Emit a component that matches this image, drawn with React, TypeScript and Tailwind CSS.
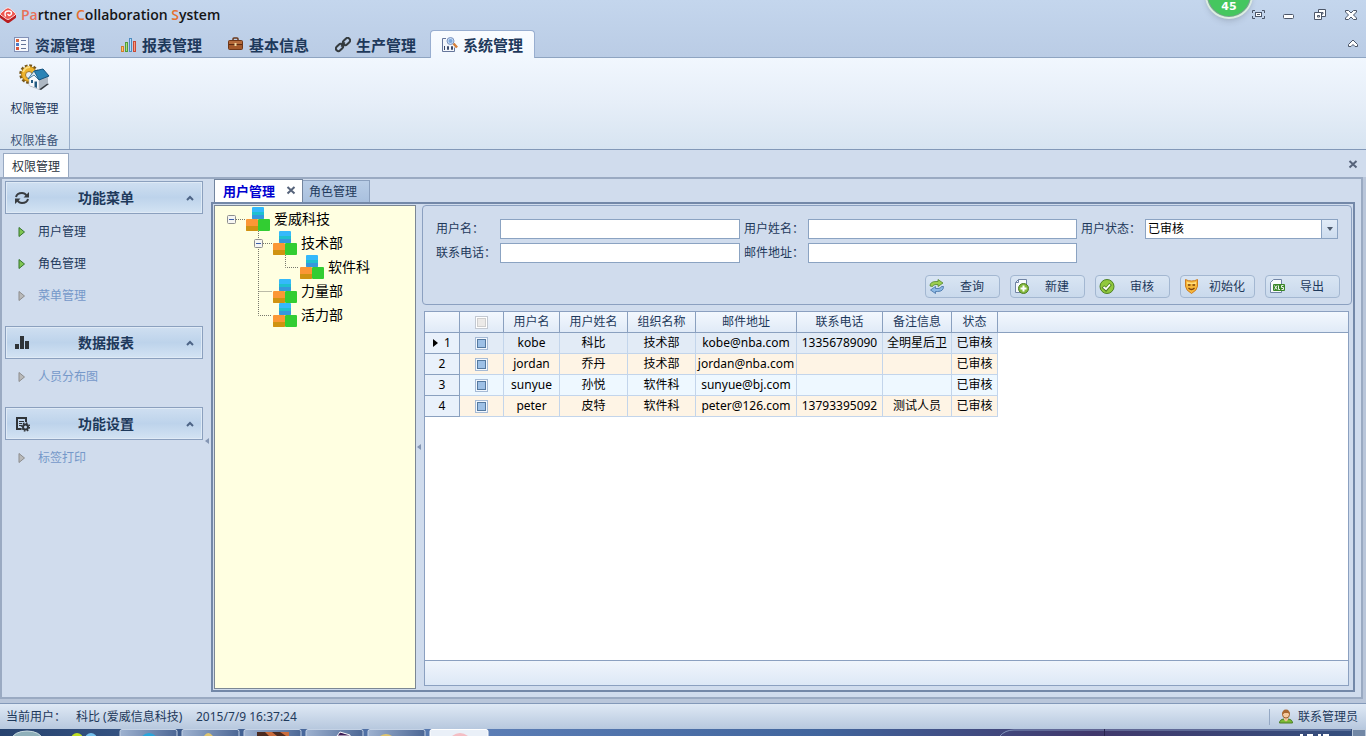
import { useState } from "react";
import type { ReactNode } from "react";

interface IUser {
  name: string;
  realName: string;
  org: string;
  email: string;
  phone: string;
  remark: string;
  status: string;
}

type Guide = "blank" | "line" | "tee" | "elbow" | "root" | "open";

interface ITreeNode {
  label: string;
  guides: Guide[];
}

interface IMenuGroup {
  title: string;
  icon: ReactNode;
  items: { label: string; enabled: boolean }[];
}

const users: IUser[] = [
  { name: "kobe", realName: "科比", org: "技术部", email: "kobe@nba.com", phone: "13356789090", remark: "全明星后卫", status: "已审核" },
  { name: "jordan", realName: "乔丹", org: "技术部", email: "jordan@nba.com", phone: "", remark: "", status: "已审核" },
  { name: "sunyue", realName: "孙悦", org: "软件科", email: "sunyue@bj.com", phone: "", remark: "", status: "已审核" },
  { name: "peter", realName: "皮特", org: "软件科", email: "peter@126.com", phone: "13793395092", remark: "测试人员", status: "已审核" }
];

const treeNodes: ITreeNode[] = [
  { label: "爱威科技", guides: ["root"] },
  { label: "技术部", guides: ["blank", "open"] },
  { label: "软件科", guides: ["blank", "line", "elbow"] },
  { label: "力量部", guides: ["blank", "tee"] },
  { label: "活力部", guides: ["blank", "elbow"] }
];

const ribbonTabs = [
  { label: "资源管理", icon: <ListIcon /> },
  { label: "报表管理", icon: <ChartIcon /> },
  { label: "基本信息", icon: <BriefcaseIcon /> },
  { label: "生产管理", icon: <ChainIcon /> },
  { label: "系统管理", icon: <SystemIcon /> }
];

const menuGroups: IMenuGroup[] = [
  {
    title: "功能菜单",
    icon: <RefreshIcon />,
    items: [
      { label: "用户管理", enabled: true },
      { label: "角色管理", enabled: true },
      { label: "菜单管理", enabled: false }
    ]
  },
  {
    title: "数据报表",
    icon: <BarsIcon />,
    items: [{ label: "人员分布图", enabled: false }]
  },
  {
    title: "功能设置",
    icon: <SettingsIcon />,
    items: [{ label: "标签打印", enabled: false }]
  }
];

const actions = [
  { label: "查询", icon: <QueryIcon /> },
  { label: "新建", icon: <NewIcon /> },
  { label: "审核", icon: <AuditIcon /> },
  { label: "初始化", icon: <MaskIcon /> },
  { label: "导出", icon: <XlsIcon /> }
];

export default function App() {
  return (
    <div className="relative flex h-screen flex-col overflow-hidden bg-[#d0dced] font-['Noto_Sans','Noto_Sans_CJK_SC',sans-serif] text-[12px] leading-4 text-[#1e395b]">
      <TitleBar />
      <Ribbon />
      <DocumentTabs />
      <div className="flex min-h-0 flex-1 bg-[#b9c6da] pr-[3px] pb-[4px]">
        <main className="flex min-h-0 min-w-0 flex-1 border-2 border-[#9aaac2] bg-[#d0dced]">
          <Sidebar />
          <Workspace />
        </main>
      </div>
      <StatusBar />
      <Taskbar />
    </div>
  );
}

function TitleBar() {
  const [active, setActive] = useState(4);

  return (
    <header className="relative shrink-0 border-b border-[#8ea4c1] bg-linear-to-b from-[#c4d6ed] to-[#bacce5]">
      <div className="flex h-[30px] items-center justify-between pr-[7px]">
        <h1 className="flex items-center gap-1 font-['Open_Sans',sans-serif] text-[14px] font-semibold text-[#151515]">
          <LogoIcon />
          <span>
            <span className="text-[#e8715a]">Pa</span>rtner{" "}
            <span className="text-[#e5702f]">C</span>ollaboration{" "}
            <span className="text-[#e5702f]">S</span>ystem
          </span>
        </h1>
        <div className="flex gap-[15px]">
          <button aria-label="Full screen" className="h-4 w-4"><FullscreenIcon /></button>
          <button aria-label="Minimize" className="h-4 w-4"><MinimizeIcon /></button>
          <button aria-label="Restore" className="h-4 w-4"><RestoreIcon /></button>
          <button aria-label="Close" className="h-4 w-4"><CloseIcon /></button>
        </div>
      </div>
      <div className="flex items-end justify-between pr-[5px]">
        <nav className="-mb-px flex gap-0.5 pl-0.5">
          {ribbonTabs.map((tab, index) => (
            <button
              key={tab.label}
              onClick={() => setActive(index)}
              className={
                index === active
                  ? "flex h-7 items-center gap-[5px] rounded-t-sm border border-b-0 border-[#98aed0] bg-linear-to-b from-[#f9fcff] to-[#f1f7fe] px-[11px] text-[15px] font-bold"
                  : "flex h-7 items-center gap-[5px] border border-b-0 border-transparent px-[11px] text-[15px] font-bold"
              }
            >
              {tab.icon}
              {tab.label}
            </button>
          ))}
        </nav>
        <button aria-label="Collapse ribbon" className="mb-1.5 h-4 w-4">
          <svg viewBox="0 0 16 16" className="h-4 w-4">
            <path d="M3.5 9.5 8 5l4.500 4.500v2h-2.500L8 9.500l-2 2H3.500z" fill="#fff" stroke="#4c5668" />
          </svg>
        </button>
      </div>
      <div className="absolute -top-[29px] right-[113px] flex h-12 w-12 items-end justify-center rounded-full border-2 border-[#dcebe2] bg-[#45c75f] pb-1 font-['DejaVu_Sans',sans-serif] text-[11px] leading-3 font-bold text-white shadow-md ring-1 ring-[#7f9d95] ring-inset">
        45
      </div>
    </header>
  );
}

function Ribbon() {
  return (
    <section className="flex h-[92px] shrink-0 border-b border-[#8298b8] bg-linear-to-b from-[#f1f7fe] via-[#e6eef8] to-[#d7e4f1]">
      <div className="flex w-[70px] flex-col items-center justify-between border-r border-[#9bb0cb] pt-[5px]">
        <button className="flex flex-col items-center gap-1.5">
          <HouseIcon />
          权限管理
        </button>
        <span className="text-[#3d5579]">权限准备</span>
      </div>
    </section>
  );
}

function DocumentTabs() {
  return (
    <div className="flex h-[27px] shrink-0 items-end justify-between pr-1 pl-[3px]">
      <button className="h-6 border border-b-0 border-[#98a9c2] bg-white px-2 pt-0.5 text-[#2b3340]">权限管理</button>
      <button aria-label="Close document" className="mb-1 h-4 w-4">
        <SmallCloseIcon />
      </button>
    </div>
  );
}

function Sidebar() {
  return (
    <aside className="relative w-[209px] shrink-0 pt-0.5 pr-2 pl-[3px]">
      {menuGroups.map((group) => (
        <section key={group.title} className="pb-3.5">
          <button className="flex h-[33px] w-full items-center border border-[#8ba0be] bg-linear-to-b from-[#cfdff1] via-[#bdd3eb] to-[#d3e3f3] px-2 shadow-[inset_0_0_0_1px_#dfeaf6]">
            {group.icon}
            <span className="flex-1 pr-1 text-center text-[14px] font-bold">{group.title}</span>
            <svg viewBox="0 0 8 6" className="h-1.5 w-2">
              <path d="M1 5 4 2l3 3" fill="none" stroke="#4d6486" strokeWidth="2" />
            </svg>
          </button>
          <ul className="pt-0.5">
            {group.items.map((item) => (
              <li key={item.label}>
                <button
                  disabled={!item.enabled}
                  className="flex h-8 w-full items-center gap-[11px] pl-3 disabled:text-[#7598c9]"
                >
                  <svg viewBox="0 0 10 12" className="h-3 w-[10px]">
                    <path
                      d="M2 1.500 7.500 6 2 10.500z"
                      fill={item.enabled ? "#7fc552" : "#b9b9b9"}
                      stroke={item.enabled ? "#35752c" : "#8d8d8d"}
                    />
                  </svg>
                  {item.label}
                </button>
              </li>
            ))}
          </ul>
        </section>
      ))}
      <svg viewBox="0 0 4 6" className="absolute top-1/2 right-0.5 h-1.5 w-1">
        <path d="M4 0v6L0 3z" fill="#8496b3" />
      </svg>
    </aside>
  );
}

function Workspace() {
  return (
    <div className="flex min-w-0 flex-1 flex-col pr-[6px] pb-[5px]">
      <div className="flex shrink-0 items-end pl-[3px]">
        <button className="flex h-[23px] items-center gap-[9px] border border-b-0 border-[#73859f] bg-white pr-1 pl-2 text-[13px] font-bold text-[#0000d0]">
          用户管理
          <SmallCloseIcon />
        </button>
        <button className="h-[22px] border border-l-0 border-b-0 border-[#8ba0be] bg-linear-to-b from-[#b9cde6] to-[#a9c0de] pr-3 pl-[6px]">
          角色管理
        </button>
      </div>
      <div className="flex min-h-0 flex-1 border-2 border-[#7388a8] bg-[#d0dced] p-px">
        <OrgTree />
        <div className="flex w-1.5 shrink-0 items-center justify-center">
          <svg viewBox="0 0 4 6" className="h-1.5 w-1">
            <path d="M4 0v6L0 3z" fill="#8496b3" />
          </svg>
        </div>
        <div className="flex min-w-0 flex-1 flex-col">
          <SearchForm />
          <UserGrid />
        </div>
      </div>
    </div>
  );
}

function OrgTree() {
  return (
    <ul className="w-[202px] shrink-0 border border-[#7b8794] bg-[#ffffe1] pt-px pl-[3px]">
      {treeNodes.map((node) => (
        <li key={node.label} className="flex h-6 items-center text-[14px] text-black">
          {node.guides.map((guide, index) => (
            <TreeGuide key={index} type={guide} />
          ))}
          <BlocksIcon />
          <span className="pl-1">{node.label}</span>
        </li>
      ))}
    </ul>
  );
}

function TreeGuide({ type }: { type: Guide }) {
  const expandable = type === "root" || type === "open";
  const paths = {
    blank: "",
    line: "M13.500 0V24",
    tee: "M13.500 0V24M13.500 12.500H27",
    elbow: "M13.500 0V12.500H27",
    root: "M18 12.500H27",
    open: "M13.500 0V24M18 12.500H27"
  };

  return (
    <svg viewBox="0 0 27 24" className="h-6 w-[27px] shrink-0">
      <path d={paths[type]} fill="none" stroke="#77776c" strokeDasharray="1 1" />
      {expandable && (
        <>
          <rect x="9.500" y="8.500" width="8" height="8" rx="1" fill="#f6f6f2" stroke="#8e8f8f" />
          <path d="M11 12.500h5" stroke="#3b5ea8" />
        </>
      )}
    </svg>
  );
}

function SearchForm() {
  const inputClass = "h-5 w-full min-w-0 border border-[#8ba3c2] bg-white px-1 text-black outline-none";

  return (
    <form
      onSubmit={(e) => e.preventDefault()}
      className="shrink-0 rounded-sm border border-[#8ba0c0] pt-[13px] pb-[6px]"
    >
      <div className="grid grid-cols-[64px_minmax(0,240fr)_68px_minmax(0,269fr)_68px_minmax(0,193fr)] items-center gap-y-1 px-[13px]">
        <label htmlFor="userName">用户名：</label>
        <input id="userName" className={inputClass} />
        <label htmlFor="realName" className="pl-1">用户姓名：</label>
        <input id="realName" className={inputClass} />
        <label htmlFor="status" className="pl-1">用户状态：</label>
        <div className="relative">
          <select
            id="status"
            defaultValue="已审核"
            className="block h-5 w-full appearance-none border border-[#8ba3c2] bg-white pl-0.5 text-black outline-none"
          >
            <option>已审核</option>
            <option>未审核</option>
          </select>
          <span className="pointer-events-none absolute inset-y-px right-px flex w-4 items-center justify-center border-l border-[#8ba3c2] bg-linear-to-b from-[#e2ecf8] to-[#cddcee]">
            <svg viewBox="0 0 6 4" className="h-1 w-1.5">
              <path d="M0 0h6L3 4z" fill="#4d5a6d" />
            </svg>
          </span>
        </div>
        <label htmlFor="phone">联系电话：</label>
        <input id="phone" className={inputClass} />
        <label htmlFor="email" className="pl-1">邮件地址：</label>
        <input id="email" className={inputClass} />
      </div>
      <div className="flex justify-end gap-[10px] pt-3 pr-[11px]">
        {actions.map((action) => (
          <button
            key={action.label}
            className="flex h-[23px] w-[75px] items-center rounded-sm border border-[#a3b7d1] bg-linear-to-b from-[#d9e5f3] to-[#c9d9ec] pl-[3px]"
          >
            {action.icon}
            <span className="flex-1 text-center">{action.label}</span>
          </button>
        ))}
      </div>
    </form>
  );
}

function UserGrid() {
  const [current, setCurrent] = useState(0);
  const th = "h-[21px] border-r border-b border-[#8aa0bf] bg-linear-to-b from-[#f3f8fe] to-[#e0eaf7] p-0 text-center font-normal";
  const rowColors = ["bg-[#e2ebf6]", "bg-[#fef4e5]", "bg-[#eef8ff]", "bg-[#fef4e5]"];
  const td = "h-[21px] truncate border-r border-b border-[#c3d5eb] p-0 text-center";

  return (
    <div className="mt-[6px] mr-[3px] mb-[3px] ml-0.5 flex min-h-0 flex-1 flex-col border border-[#8ba0c0] bg-white">
      <div className="min-h-0 flex-1">
        <table className="w-full table-fixed border-separate border-spacing-0">
          <colgroup>
            <col className="w-[35px]" />
            <col className="w-[44px]" />
            <col className="w-[56px]" />
            <col className="w-[68px]" />
            <col className="w-[68px]" />
            <col className="w-[101px]" />
            <col className="w-[86px]" />
            <col className="w-[69px]" />
            <col className="w-[46px]" />
            <col />
          </colgroup>
          <thead>
            <tr>
              <th className={th}></th>
              <th className={th}>
                <input
                  type="checkbox"
                  aria-label="Select all"
                  className="mx-auto block h-[13px] w-[13px] appearance-none border border-[#c3c9d2] bg-[#eceae8] shadow-[inset_0_0_0_1px_#fff,inset_0_0_0_2px_#cfcfcf]"
                />
              </th>
              <th className={th}>用户名</th>
              <th className={th}>用户姓名</th>
              <th className={th}>组织名称</th>
              <th className={th}>邮件地址</th>
              <th className={th}>联系电话</th>
              <th className={th}>备注信息</th>
              <th className={th}>状态</th>
              <th className="border-b border-[#8aa0bf] bg-linear-to-b from-[#f3f8fe] to-[#e0eaf7] p-0"></th>
            </tr>
          </thead>
          <tbody className="text-black">
            {users.map((user, index) => (
              <tr key={user.name} onClick={() => setCurrent(index)} className={rowColors[index % 4]}>
                <td className="h-[21px] border-r border-b border-[#8aa0bf] bg-[#e9f1fb] p-0">
                  <div className="flex items-center justify-center gap-1.5">
                    {index === current && (
                      <svg viewBox="0 0 5 8" className="h-2 w-[5px]">
                        <path d="M0 0 5 4 0 8z" fill="#000" />
                      </svg>
                    )}
                    {index + 1}
                  </div>
                </td>
                <td className={td}>
                  <input
                    type="checkbox"
                    aria-label={user.name}
                    className="mx-auto block h-[13px] w-[13px] appearance-none border border-[#a5bad5] bg-[#9dc0e6] shadow-[inset_0_0_0_1px_#f3f8fe,inset_0_0_0_2px_#55799f]"
                  />
                </td>
                <td className={td}>{user.name}</td>
                <td className={td}>{user.realName}</td>
                <td className={td}>{user.org}</td>
                <td className={td}>{user.email}</td>
                <td className={td}>{user.phone}</td>
                <td className={td}>{user.remark}</td>
                <td className={td}>{user.status}</td>
                <td className="bg-white p-0"></td>
              </tr>
            ))}
          </tbody>
        </table>
      </div>
      <div className="h-[25px] shrink-0 border-t border-[#8ba0c0] bg-linear-to-b from-[#f0f5fc] to-[#dde8f6]"></div>
    </div>
  );
}

function StatusBar() {
  return (
    <footer className="flex h-[26px] shrink-0 items-center justify-between border-t border-[#8399b9] bg-linear-to-b from-[#dfe9f5] to-[#b7c8de] pr-2 pl-[6px]">
      <div className="flex">
        <span className="w-[70px]">当前用户：</span>
        <span className="w-[120px]">科比 (爱威信息科技)</span>
        <span>2015/7/9 16:37:24</span>
      </div>
      <a href="#contact" className="flex items-center gap-1 border-l border-[#94a8c4] pl-2">
        <PersonIcon />
        联系管理员
      </a>
    </footer>
  );
}

function Taskbar() {
  return (
    <svg viewBox="0 0 1366 7" preserveAspectRatio="xMinYMin slice" className="h-[7px] w-full shrink-0">
      <defs>
        <linearGradient id="bar">
          <stop offset="0" stopColor="#27436f" />
          <stop offset="0.35" stopColor="#5c7eb6" />
          <stop offset="0.6" stopColor="#41659d" />
          <stop offset="0.8" stopColor="#41386c" />
          <stop offset="1" stopColor="#35517f" />
        </linearGradient>
        <linearGradient id="task">
          <stop offset="0" stopColor="#9eb2d0" />
          <stop offset="1" stopColor="#4c6795" />
        </linearGradient>
      </defs>
      <path d="M0 0h1366v7H0z" fill="url(#bar)" />
      <ellipse cx="27" cy="10" rx="15" ry="8" fill="#8fb0ba" stroke="#cbdde2" />
      <circle cx="77" cy="10" r="6" fill="#bede23" />
      <circle cx="91" cy="10" r="6" fill="#73bfec" />
      {[120, 182, 244, 306, 368].map((x) => (
        <rect key={x} x={x} y="0.5" width="57" height="9" rx="2" fill="url(#task)" stroke="#c4d2e5" />
      ))}
      <rect x="430" y="0.5" width="58" height="9" rx="2" fill="#eaf0f8" stroke="#fff" />
      <circle cx="149" cy="13" r="9" fill="#28a5dc" />
      <path d="M204 7q4-6 9 0zM380 7q6-4 12 0z" fill="#dfc56e" />
      <path d="M257 3h32v4h-32z" fill="#4c2b20" />
      <path d="m265 3 4 4h8l-5-4zm15 0 6 4h3V3z" fill="#ca6c3d" />
      <path d="m337 7 3-4 10 3v1z" fill="#3d1d56" stroke="#fff" />
      <path d="M452 7q8-6 16 0z" fill="#f4bec4" />
      <path d="M1000 7q5-6 14-6h337" fill="none" stroke="#8295bc" />
      <path d="M1104.500 0v7" stroke="#29254f" />
      <path d="M1300 6h3M1307 6h6M1318 6h3M1323 6h6" stroke="#fff" strokeWidth="2" />
      <rect x="1352.500" y="0.5" width="13" height="9" fill="#7288a6" stroke="#b8c7da" />
    </svg>
  );
}

function LogoIcon() {
  return (
    <svg viewBox="0 0 17 16" className="h-4 w-[17px]">
      <path d="M0 6v4q0 1 1 1.500l5.500 4q1.500 1 3 0l5.500-4q1-.5 1-1.500V6z" fill="#b91c1f" />
      <path d="M.8 6 6 1.500q2-1.500 4 0L15.200 6q1 1 0 2L9.500 12q-1.500 1-3 0L.8 8q-1-1 0-2z" fill="#ee5750" stroke="#fff" strokeWidth="0.8" />
      <path d="M5.500 9.500 5 7q0-3 3.500-3 3 0 3 2T9 8.500L7.500 7" fill="none" stroke="#fff" strokeWidth="1.4" />
    </svg>
  );
}

function FullscreenIcon() {
  return (
    <svg viewBox="0 0 16 16" className="h-4 w-4" fill="none" stroke="#4c5668">
      <path d="M2.500 6V3.500H5M12 3.500h2.500V6M2.500 9v2.500H5M12 11.500h2.500V9" />
      <rect x="5.500" y="5.500" width="6" height="4" fill="#fff" />
      <path d="M7 7.500h3" />
    </svg>
  );
}

function MinimizeIcon() {
  return (
    <svg viewBox="0 0 16 16" className="h-4 w-4">
      <rect x="2.500" y="7.500" width="10" height="4" rx="1" fill="#fff" stroke="#4c5668" />
    </svg>
  );
}

function RestoreIcon() {
  return (
    <svg viewBox="0 0 16 16" className="h-4 w-4" fill="#fff" stroke="#4c5668">
      <path d="M6.500 2.500h7v7h-7z" />
      <path d="M9.500 5.500h1.500v1.500H9.500z" />
      <path d="M2.500 5.500h7v7h-7z" />
      <path d="M5.500 8.500h2v1.500h-2z" />
    </svg>
  );
}

function CloseIcon() {
  return (
    <svg viewBox="0 0 16 16" className="h-4 w-4">
      <path
        d="M2.500 3.500h3L8 6l2.500-2.500h3v1.500L10.500 8l3 3v1.500h-3L8 10l-2.500 2.500h-3V11l3-3-3-3z"
        fill="#fff"
        stroke="#4c5668"
      />
    </svg>
  );
}

function SmallCloseIcon() {
  return (
    <svg viewBox="0 0 14 14" className="h-3.5 w-3.5">
      <path d="m3.500 3 7 6.500m0-6.500-7 6.500" stroke="#56637a" strokeWidth="2" />
    </svg>
  );
}

function ListIcon() {
  return (
    <svg viewBox="0 0 16 16" className="h-4 w-4">
      <rect x="0.500" y="0.500" width="14" height="14" fill="#f6f8fd" stroke="#8291b6" />
      <path d="M2 2h3v3H2z" fill="#e0663f" />
      <path d="M2 6h3v3H2z" fill="#4d7ac8" />
      <path d="M2 10h3v3H2z" fill="#d9543e" />
      <path d="M7 3.500h5M7 7.500h5M7 11.500h5" stroke="#65759a" />
    </svg>
  );
}

function ChartIcon() {
  return (
    <svg viewBox="0 0 16 16" className="h-4 w-4">
      <rect x="0.500" y="9.500" width="2" height="5" fill="#ffc36f" stroke="#d47d2a" />
      <rect x="4.500" y="5.500" width="2" height="9" fill="#a9dc7b" stroke="#4f9c39" />
      <rect x="8.500" y="1.500" width="2" height="13" fill="#b7dcf5" stroke="#4d8cc0" />
      <rect x="12.500" y="4.500" width="2" height="10" fill="#f59a80" stroke="#c94a36" />
    </svg>
  );
}

function BriefcaseIcon() {
  return (
    <svg viewBox="0 0 16 16" className="h-4 w-4">
      <path d="M5 3.500V2q0-1 1-1h3q1 0 1 1v1.500" fill="none" stroke="#6b3a1d" strokeWidth="1.500" />
      <rect x="0.500" y="3.500" width="14" height="9" rx="1" fill="#a4592b" stroke="#6f3718" />
      <path d="M1 4h13v3H1z" fill="#b56a3a" />
      <path d="M1 7.500h13" stroke="#5d2b12" />
      <path d="M6.500 6h2v3h-2z" fill="#f1d9a0" />
    </svg>
  );
}

function ChainIcon() {
  return (
    <svg viewBox="0 0 16 16" className="h-4 w-4" fill="none" stroke="#353b3e" strokeWidth="2">
      <rect x="7.500" y="2" width="8" height="5" rx="2.500" transform="rotate(-45 11.500 4.500)" />
      <rect x="0.500" y="8" width="8" height="5" rx="2.500" transform="rotate(-45 4.500 10.500)" />
      <path d="m6 9.500 4-4" strokeWidth="1.500" />
    </svg>
  );
}

function SystemIcon() {
  return (
    <svg viewBox="0 0 16 16" className="h-4 w-4">
      <path d="M4 1.500H.5v13h12v-4" fill="#f3f6fb" stroke="#65769b" />
      <path d="M2.500 9v4M5.500 9.500h1v3h-1zM9.500 9.500h1v3h-1z" fill="none" stroke="#3a4a6c" />
      <circle cx="8.500" cy="4" r="3.500" fill="#c7dcf5" stroke="#7b93bf" />
      <circle cx="8.500" cy="4" r="2" fill="#7ba8de" />
      <path d="m11.500 6.500 3.500 4" stroke="#d5803b" strokeWidth="2.500" />
    </svg>
  );
}

function HouseIcon() {
  return (
    <svg viewBox="0 0 32 32" className="h-8 w-8">
      <circle cx="11" cy="11" r="8" fill="none" stroke="#75561a" strokeWidth="3.500" strokeDasharray="2.600 1.588" />
      <circle cx="11" cy="11" r="7.500" fill="#efb42d" stroke="#b98316" />
      <path d="M5 9q2-5 7-5" fill="none" stroke="#fbdc7c" strokeWidth="2" />
      <circle cx="11" cy="12" r="3.500" fill="#e5edf7" stroke="#a1761d" />
      <path d="m12 23 11 4 8-6-6-2z" fill="#33393f" />
      <path d="m20 16 10-4v8l-9 6.500z" fill="#aeb8c3" />
      <path d="M11 15v7.500l10 4V17l-5-6z" fill="#f7f9fb" stroke="#a9b3bf" strokeWidth="0.500" />
      <path d="m16 8 9-2 6 7-10 4z" fill="#2b84b6" stroke="#13527f" />
      <path d="m10 16 6-8 5 9-5-5z" fill="#e4edf4" stroke="#16618f" strokeWidth="0.800" />
      <path d="M13 17h2v3h-2zM16.500 18.500H19V25l-2.500-1z" fill="#245b82" />
    </svg>
  );
}

function RefreshIcon() {
  return (
    <svg viewBox="0 0 16 16" className="h-4 w-4">
      <path d="M2 7q1-4 6-4 3 0 4.500 2.500M14 9q-1 4-6 4-3 0-4.500-2.500" fill="none" stroke="#383c40" strokeWidth="2" />
      <path d="M15 2v5.500H9.500zM1 14V8.500h5.500z" fill="#383c40" />
    </svg>
  );
}

function BarsIcon() {
  return (
    <svg viewBox="0 0 16 16" className="h-4 w-4">
      <path d="M1 9h4v5H1zM6 1h4v13H6zM11 6h4v8h-4z" fill="#303438" />
    </svg>
  );
}

function SettingsIcon() {
  return (
    <svg viewBox="0 0 16 16" className="h-4 w-4" fill="none" stroke="#303438">
      <path d="M7 13H3V2h9v4" strokeWidth="2" />
      <path d="M5 5.500h5M5 7.500h3M5 9.500h2" />
      <circle cx="11.500" cy="11" r="2.500" strokeWidth="2" />
      <circle cx="11.500" cy="11" r="4" strokeWidth="1.500" strokeDasharray="1.600 1.540" />
    </svg>
  );
}

function BlocksIcon() {
  return (
    <svg viewBox="0 0 25 24" className="h-6 w-[25px] shrink-0">
      <rect x="7" y="0" width="12" height="12" rx="1" fill="#35b9fb" />
      <path d="M7 5h12v3H7z" fill="#1fc0cf" />
      <path d="M7 8h12v3q0 1-1 1H8q-1 0-1-1z" fill="#3598dd" />
      <rect x="1" y="12" width="12" height="12" rx="1" fill="#fb9735" />
      <path d="M1 19h12v4q0 1-1 1H2q-1 0-1-1z" fill="#cf9311" />
      <rect x="13" y="12" width="12" height="12" rx="1" fill="#32cd32" />
    </svg>
  );
}

function QueryIcon() {
  return (
    <svg viewBox="0 0 16 16" className="h-4 w-4">
      <path d="M1 7q0-4.500 6-4.500h2V.5L14 4 9 7.500v-2H7q-3 0-3.500 2z" fill="#9cce4f" stroke="#54862c" strokeWidth="0.800" />
      <path d="M14.500 7.500q0 5-6 5h-2v2L1.500 11l5-3.500v2H9q3 0 3.500-2z" fill="#8db9e4" stroke="#416fa5" strokeWidth="0.800" />
    </svg>
  );
}

function NewIcon() {
  return (
    <svg viewBox="0 0 16 16" className="h-4 w-4">
      <path d="M4.500.5h8v13h-11v-10z" fill="#f8fafc" stroke="#7184a5" />
      <path d="M4.500.5v3h-3" fill="none" stroke="#7184a5" />
      <circle cx="9.500" cy="9.500" r="5" fill="#84b93b" stroke="#4f7d24" />
      <path d="M9.500 6.500v6M6.500 9.500h6" stroke="#fff" strokeWidth="2" />
    </svg>
  );
}

function AuditIcon() {
  return (
    <svg viewBox="0 0 16 16" className="h-4 w-4">
      <circle cx="8" cy="7.500" r="7" fill="#91c83e" stroke="#4e8224" />
      <path d="m4 7.500 3 3L11.500 5" fill="none" stroke="#4e7c22" strokeWidth="3.500" />
      <path d="m4.500 8 2.500 2 4-4.500" fill="none" stroke="#fff" strokeWidth="1.800" />
    </svg>
  );
}

function MaskIcon() {
  return (
    <svg viewBox="0 0 16 16" className="h-4 w-4">
      <path d="M1.500.5Q4 2 7.500 2t6-1.500V7q0 4-6 7.500-6-3.500-6-7.500z" fill="#f7b83c" stroke="#cd7c20" />
      <path d="M3 3q5 1.500 9 0v2H3z" fill="#ffdf80" />
      <path d="M4 6h2.500M8.500 6H11M4.500 9q3 3 6 0" fill="none" stroke="#79400c" strokeWidth="1.300" />
    </svg>
  );
}

function XlsIcon() {
  return (
    <svg viewBox="0 0 16 16" className="h-4 w-4">
      <path d="M4.500.5h8v13h-11v-10z" fill="#f8fafc" stroke="#7184a5" />
      <rect x="4" y="5" width="12" height="7" rx="1" fill="#3b8729" />
      <path d="m5.500 6.500 2.500 4m0-4-2.500 4M9.500 6.500v4H11M14.500 6.500h-2v2h2v2h-2" fill="none" stroke="#fff" strokeWidth="0.900" />
    </svg>
  );
}

function PersonIcon() {
  return (
    <svg viewBox="0 0 16 16" className="h-4 w-4">
      <path d="M1.500 14q0-3.500 4.500-4h4q4.500.5 4.500 4z" fill="#7cba35" stroke="#4a7e27" />
      <path d="M6 9h4v2l-2 1.500L6 11z" fill="#efc196" />
      <circle cx="8" cy="5.500" r="3.500" fill="#f5ca9f" stroke="#9c6031" />
      <path d="M4 6q0-5.500 4-5.500T12 6l-1.500-2h-4z" fill="#aa6932" />
    </svg>
  );
}
